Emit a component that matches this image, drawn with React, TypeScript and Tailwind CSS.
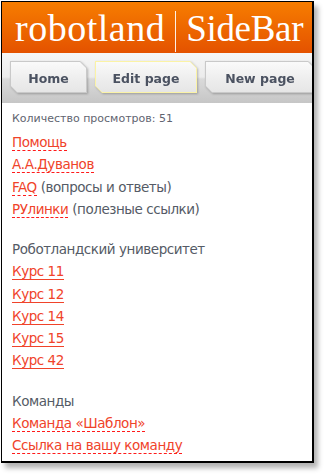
const font = { fontFamily: '"DejaVu Sans", Verdana, sans-serif' };

function Tab({ label, active, width }: { label: string; active?: boolean; width: number }) {
  const clip = 'polygon(0 0, calc(100% - 7px) 0, 100% 7px, 100% 100%, 7px 100%, 0 calc(100% - 7px))';
  return (
    <div className="relative h-[32px] shrink-0 drop-shadow-[1px_1px_1px_rgba(0,0,0,0.25)]" style={{ width }}>
      <div
        className={`absolute inset-0 ${active ? 'bg-[#fbf3a6]' : 'bg-[#c9c9c9]'}`}
        style={{ clipPath: clip }}
      />
      <div
        className="absolute inset-[1px] flex items-center justify-center bg-[linear-gradient(to_bottom,#fafafa,#eeeeee_55%,#e6e6e6)] text-[12.5px] font-bold text-[#4b5261]"
        style={{ clipPath: 'polygon(0 0, calc(100% - 6px) 0, 100% 6px, 100% 100%, 6px 100%, 0 calc(100% - 6px))', ...font }}
      >
        <span className="pt-[4px]">{label}</span>
      </div>
    </div>
  );
}

function Link({ children, solid }: { children: React.ReactNode; solid?: boolean }) {
  return (
    <span
      className={`text-[#f0432a] ${solid ? 'border-b border-solid border-[#f0432a]' : 'border-b border-dashed border-[#ff1a1a]'}`}
    >
      {children}
    </span>
  );
}

export default function App() {
  return (
    <div className="w-[324px] h-[475px] bg-white relative overflow-hidden">
      <div className="ml-[1px] mt-[1px] w-[313px] h-[462px] border border-black border-r-2 border-b-2 shadow-[4px_5px_5px_rgba(0,0,0,0.3)] bg-white overflow-hidden">
        <div className="h-[51px] bg-[linear-gradient(to_bottom,#f77d00,#e45200)] flex items-end pl-[13px] text-white whitespace-nowrap" style={{ fontFamily: '"Liberation Serif", "Times New Roman", serif' }}>
          <span className="text-[38px] tracking-[0.5px] leading-none pb-[6px]">robotland</span>
          <span className="w-px h-[41px] bg-white/90 mx-[10px] self-end mb-[1px]" />
          <span className="text-[37px] tracking-[-0.3px] leading-none pb-[6px]">SideBar</span>
        </div>
        <div className="h-[50px] bg-[linear-gradient(to_bottom,#f6f6f6,#ececec_48%,#dadada_52%,#c6c6c6)] flex gap-[8px] pl-[8px] pt-[8px]">
          <Tab label="Home" width={77} />
          <Tab label="Edit page" width={102} active />
          <Tab label="New page" width={110} />
        </div>
        <div className="pl-[10px] pt-[8px] text-[#555b66] text-[13.5px] tracking-[-0.45px] leading-[22.25px]" style={font}>
          <div className="text-[11px] tracking-normal leading-[16px] text-[#5f6470] mb-[4px]">Количество просмотров: 51</div>
          <div><Link>Помощь</Link></div>
          <div><Link>А.А.Дуванов</Link></div>
          <div><Link>FAQ</Link> (вопросы и ответы)</div>
          <div><Link>РУлинки</Link> (полезные ссылки)</div>
          <div className="mt-[18px]">Роботландский университет</div>
          <div><Link solid>Курс 11</Link></div>
          <div><Link solid>Курс 12</Link></div>
          <div><Link solid>Курс 14</Link></div>
          <div><Link solid>Курс 15</Link></div>
          <div><Link solid>Курс 42</Link></div>
          <div className="mt-[18px]">Команды</div>
          <div><Link>Команда «Шаблон»</Link></div>
          <div><Link>Ссылка на вашу команду</Link></div>
        </div>
      </div>
    </div>
  );
}
